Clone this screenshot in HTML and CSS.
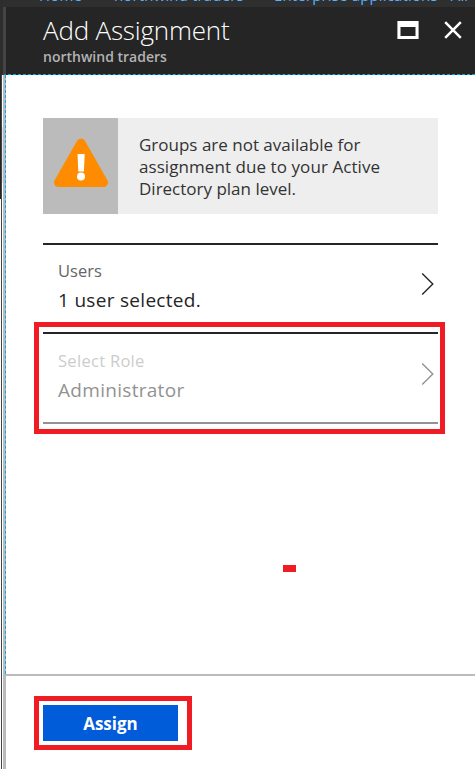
FILE: index.html
```html
<!DOCTYPE html>
<html lang="en">
<head>
<meta charset="utf-8">
<title>Add Assignment</title>
<link rel="stylesheet" href="styles.css">
</head>
<body>
<div class="rail"></div>
<div class="page">
  <nav class="crumbs"><span class="c1">Home</span><span class="c2">northwind traders</span><span class="c3">Enterprise applications - All</span></nav>
  <div class="blade">
    <header class="header">
      <div class="titles">
        <h1>Add Assignment</h1>
        <p>northwind traders</p>
      </div>
      <svg class="win" width="22" height="18" viewBox="0 0 22 18"><path fill="#fff" fill-rule="evenodd" d="M.4 0H21.6V18H.4ZM3.5 6V15H18.5V6Z"/></svg>
      <svg class="close" width="18" height="18" viewBox="0 0 18 18"><path d="M1.2 1.2 16.8 16.8M16.8 1.2 1.2 16.8" stroke="#fff" stroke-width="2.5"/></svg>
    </header>
    <main class="content">
      <section class="notice">
        <div class="notice-icon">
          <svg width="56" height="50" viewBox="0 0 56 50"><path d="M28 5 50.5 44.500H5.500Z" fill="#ff8c00" stroke="#ff8c00" stroke-width="9" stroke-linejoin="round"/><path d="M24.500 16h7.200l-.8 17.500h-5.600z" fill="#fff"/><circle cx="28" cy="38.500" r="4" fill="#fff"/></svg>
        </div>
        <p>Groups are not available for<br><span class="n2">assignment due to your Active</span><br>Directory plan level.</p>
      </section>
      <div class="row">
        <div><div class="label">Users</div><div class="value">1 user selected.</div></div>
        <svg width="14" height="24" viewBox="0 0 14 24"><path d="M1.200 1.500 11.800 12 1.200 22.500" fill="none" stroke="#252525" stroke-width="1.400"/></svg>
      </div>
      <div class="row role">
        <div><div class="label">Select Role</div><div class="value">Administrator</div></div>
        <svg width="14" height="24" viewBox="0 0 14 24"><path d="M1.200 1.500 11.800 12 1.200 22.500" fill="none" stroke="#929292" stroke-width="1.400"/></svg>
        <i class="mark"></i>
      </div>
      <i class="dash"></i>
    </main>
    <footer class="footer"><div class="button-mark"><button>Assign</button></div></footer>
  </div>
</div>
</body>
</html>
```
FILE: styles.css
```css
* { box-sizing: border-box; }
body { margin: 0; width: 475px; height: 769px; display: flex; overflow: hidden; background: #fff; font-family: "Open Sans", sans-serif; color: #333; }
h1, p { margin: 0; }
.rail { width: 3px; background: linear-gradient(#2d2d2d, #2d2d2d) 0 0 / 3px 75px no-repeat, linear-gradient(#dce8f6, #dce8f6) 2px 127px / 1px 56px no-repeat, linear-gradient(#252525, #252525) 0 0 / 1px 199px no-repeat, linear-gradient(#444, #444) 1px 0 / 1px 769px no-repeat, #fff; }
.page { width: 472px; }
.crumbs { height: 7px; background: #2f2f2f; color: #55b3ff; font-size: 15px; line-height: 18px; display: flex; white-space: nowrap; overflow: hidden; }
.crumbs span { margin-top: -14px; flex: none; letter-spacing: .15px; }
.c1 { margin-left: 36px; width: 75px; }
.c2 { width: 160px; }
.blade { height: 762px; border-left: 3px solid #bbb; display: flex; flex-direction: column; }
.header { height: 68px; margin-left: -3px; padding-left: 37px; border-left: 3px solid #444; background: #252525; display: flex; border-bottom: 1px dashed #00abec; }
.titles { width: 354px; padding-top: 5px; }
h1 { font-size: 26px; line-height: 36px; font-weight: 300; letter-spacing: -.2px; color: #fff; white-space: nowrap; }
.titles p { font-size: 14px; line-height: 18px; font-weight: 600; color: #b3b3b3; }
.win { margin-top: 14px; }
.close { margin: 14px 0 0 25px; }
.content { height: 599px; margin-left: -1px; border-left: 1px dashed #00abec; padding: 43px 37px 0; position: relative; }
.notice { height: 96px; background: #eee; display: flex; }
.notice-icon { width: 75px; background: #bbb; padding: 20px 0 0 10px; }
.notice p { padding: 16px 0 0 21px; font-size: 17px; line-height: 22px; white-space: nowrap; }
.n2 { letter-spacing: .07px; }
.row { height: 89px; border-top: 2px solid #252525; padding: 15px 3px 0 15px; display: flex; justify-content: space-between; }
.notice + .row { margin-top: 29px; }
.row svg { margin-top: 12px; }
.label { font-size: 16.5px; line-height: 22px; color: #666; }
.value { font-size: 19px; line-height: 28px; margin-top: 4px; color: #252525; letter-spacing: .3px; }
.role { height: 92px; padding-top: 16px; border-bottom: 2px solid #929292; position: relative; }
.role .label { color: #ccc; letter-spacing: .3px; }
.role .value { color: #929292; }
.mark { position: absolute; left: -9px; top: -12px; width: 411px; height: 112px; border: 5px solid #f01c24; }
.dash { position: absolute; left: 277px; top: 490px; width: 13px; height: 7px; background: #f01c24; }
.footer { flex: 1; border-top: 2px solid #bbb; padding: 20px 0 0 28px; }
.button-mark { width: 158px; height: 54px; border: 5px solid #f01c24; padding: 4px; }
button { display: block; width: 135px; height: 36px; border: 0; padding: 2px 0 0; background: #015cda; color: #fff; font: 700 17px/34px "Open Sans", sans-serif; }
```
